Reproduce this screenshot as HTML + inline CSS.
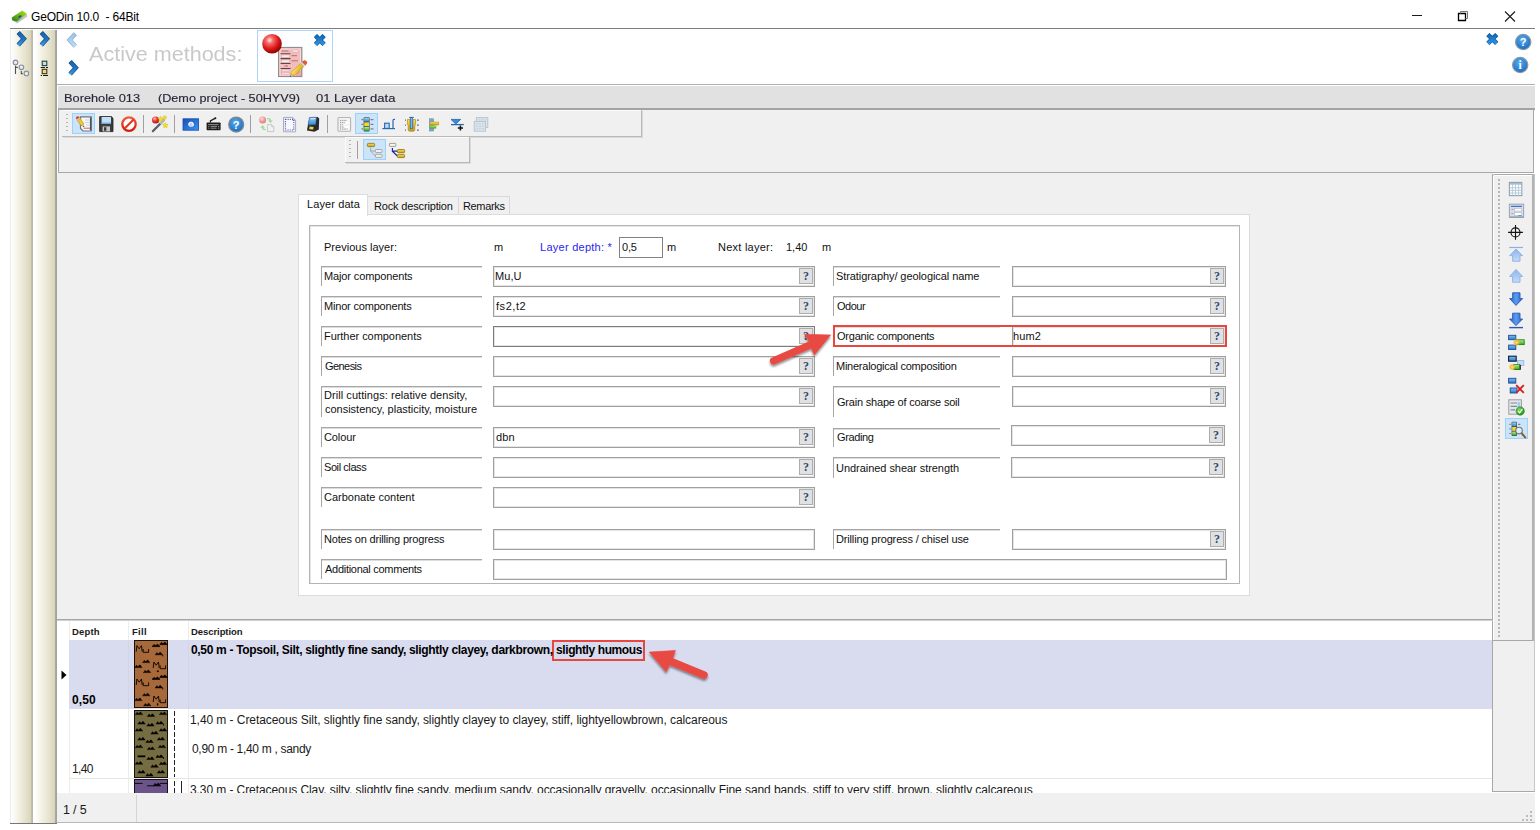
<!DOCTYPE html>
<html>
<head>
<meta charset="utf-8">
<title>GeODin 10.0 - 64Bit</title>
<style>
*{box-sizing:border-box;margin:0;padding:0}
html,body{width:1540px;height:830px;overflow:hidden;background:#fff}
body{font-family:"Liberation Sans",sans-serif;font-size:11px;color:#111;position:relative}
.a{position:absolute}
.t{position:absolute;white-space:pre;line-height:1}
.strip{position:absolute;top:30px;width:22px;height:793px;background:linear-gradient(90deg,#ffffff 0%,#f4f2e6 35%,#e2dfc8 80%,#d8d4b8 100%)}
.lbl{position:absolute;border-top:1px solid #a6a6a6;border-left:1px solid #a6a6a6;width:161px;height:20px;box-shadow:inset 0 1px 0 #dcdcdc}
.inp{position:absolute;border:1px solid #a0a0a0;background:#fff;height:21px;box-shadow:inset 0 0 0 1px #e4e4e4}
.q{position:absolute;width:14px;height:16px;background:#e1e1e1;border:1px solid #adadad;font-family:"Liberation Serif",serif;font-weight:bold;font-size:12px;line-height:14px;text-align:center;color:#2c4a78}
.sel{position:absolute;background:#cce4f7;border:1px solid #99d1ff}
.sep{position:absolute;width:1px;background:#a0a0a0}
.grip{position:absolute;width:2px;background-image:linear-gradient(#b4b4b4 1px,transparent 1px);background-size:2px 4px}
svg{position:absolute;overflow:visible}
</style>
</head>
<body>
<!-- ============ TITLE BAR ============ -->
<svg class="a" style="left:8px;top:6px" width="24" height="20" viewBox="8 6 24 20">
  <defs><linearGradient id="tig" x1="0.9" y1="0.1" x2="0.15" y2="0.9"><stop offset="0" stop-color="#a4de12"/><stop offset="0.5" stop-color="#6cbc10"/><stop offset="1" stop-color="#38861c"/></linearGradient>
  <filter id="tib"><feGaussianBlur stdDeviation="0.45"/></filter></defs>
  <g filter="url(#tib)">
  <path d="M11.6 19.5 L17 23.6 L27.4 16.4 L26.8 14 L12 17.5 Z" fill="#c4c4c4"/>
  <path d="M11.8 17.4 L22.2 10.4 L26.8 13.8 L17 21.6 L12.4 20.4 Z" fill="url(#tig)"/>
  <ellipse cx="19.9" cy="16.5" rx="1.7" ry="1" fill="#2a3cc8" transform="rotate(-25 19.9 16.5)"/>
  </g>
</svg>
<!-- window controls -->
<svg class="a" style="left:1400px;top:5px" width="130" height="22" viewBox="0 0 130 22">
  <path d="M12 10.5 H22" stroke="#1a1a1a" stroke-width="1" fill="none"/>
  <path d="M58.5 8.5 H65.5 V15.5 H58.5 Z" stroke="#000" stroke-width="1.3" fill="none"/>
  <path d="M60.5 8.5 V6.5 H67.5 V13.5 H65.5" stroke="#777" stroke-width="1" fill="none"/>
  <path d="M105 6.5 L115 16.5 M115 6.5 L105 16.5" stroke="#1a1a1a" stroke-width="1.1" fill="none"/>
</svg>
<!-- top line -->
<div class="a" style="left:10px;top:28px;width:1525px;height:1px;background:#7e7e7e"></div>

<!-- ============ LEFT STRIPS ============ -->
<div class="strip" style="left:10px;width:21px;border-left:1px solid #ececec"></div>
<div class="a" style="left:31px;top:30px;width:2px;height:793px;background:linear-gradient(90deg,#c6c2ac,#b4b4b2)"></div>
<div class="strip" style="left:34px;width:21px"></div>
<div class="a" style="left:54.5px;top:30px;width:2.5px;height:793px;background:linear-gradient(90deg,#b8b6a6,#9e9e9e 40%,#a6a6a6)"></div>
<div class="a" style="left:10px;top:823px;width:47px;height:1px;background:#777"></div>

<svg style="left:0;top:0" width="60" height="90" viewBox="0 0 60 90">
  <defs>
    <linearGradient id="chv" x1="0" y1="0" x2="0" y2="1"><stop offset="0" stop-color="#1c63a8"/><stop offset="0.55" stop-color="#1f74c4"/><stop offset="1" stop-color="#3f9be6"/></linearGradient>
  </defs>
  <!-- chevrons -->
  <path d="M18.20 32.60 L23.90 38.85 L18.20 45.10" fill="none" stroke="#12518f" stroke-width="4.5"/><path d="M18.20 32.60 L23.90 38.85 L18.20 45.10" fill="none" stroke="url(#chv)" stroke-width="3"/>
  <path d="M41.30 32.60 L47.00 38.85 L41.30 45.10" fill="none" stroke="#12518f" stroke-width="4.5"/><path d="M41.30 32.60 L47.00 38.85 L41.30 45.10" fill="none" stroke="url(#chv)" stroke-width="3"/>
  <!-- tree icon -->
  <g stroke="#8c9096" stroke-width="1.1" fill="#e2ecf8">
    <circle cx="15.5" cy="62.4" r="2.3"/><circle cx="21.4" cy="67.3" r="2.3"/><circle cx="26.4" cy="73.4" r="2.3"/>
  </g>
  <path d="M15.5 65.8 V74 M15.5 67.4 H17.8 M21.3 71 V73.6 H22.8" stroke="#4a5058" stroke-width="1.1" fill="none"/>
  <!-- network icon -->
  <rect x="42.2" y="61.2" width="4.6" height="4.4" fill="#b4ecdc" stroke="#2c3c3c" stroke-width="1.1"/>
  <rect x="42.2" y="69.3" width="4.6" height="4.4" fill="#f8da6c" stroke="#3c3420" stroke-width="1.1"/>
  <path d="M40.7 67.5 H45 M46 67.5 H48" stroke="#1a1a1a" stroke-width="1"/>
  <path d="M40.7 75.5 H42 M43 75.5 H48" stroke="#1a1a1a" stroke-width="1"/>
</svg>


<!-- ============ ACTIVE METHODS PANEL ============ -->
<div class="a" style="left:57px;top:84px;width:1478px;height:1px;background:#b0b0b0"></div>
<div class="a" style="left:257px;top:30px;width:76px;height:52px;border:1px solid #b4d2f4;background:#fdfeff"></div>
<svg style="left:0;top:0" width="1540" height="90" viewBox="0 0 1540 90">
  <defs>
    <linearGradient id="chl" x1="0" y1="0" x2="0" y2="1"><stop offset="0" stop-color="#9fc0e0"/><stop offset="1" stop-color="#bcdcf8"/></linearGradient>
    <radialGradient id="rb" cx="0.38" cy="0.32" r="0.7"><stop offset="0" stop-color="#ffe4e4"/><stop offset="0.25" stop-color="#f86a6a"/><stop offset="0.65" stop-color="#d81818"/><stop offset="1" stop-color="#8c0000"/></radialGradient>
    <linearGradient id="bx" x1="0" y1="0" x2="0" y2="1"><stop offset="0" stop-color="#1668b4"/><stop offset="1" stop-color="#2b94e8"/></linearGradient>
    <radialGradient id="hb" cx="0.45" cy="0.35" r="0.75"><stop offset="0" stop-color="#5aaef0"/><stop offset="0.7" stop-color="#2478c8"/><stop offset="1" stop-color="#1b5ea6"/></radialGradient>
    <linearGradient id="pn" x1="0" y1="0" x2="1" y2="1"><stop offset="0" stop-color="#fbe86a"/><stop offset="1" stop-color="#d4a818"/></linearGradient>
  </defs>
  <!-- chevrons -->
  <path d="M75.30 33.80 L69.60 40.05 L75.30 46.30" fill="none" stroke="#8db4d8" stroke-width="4.5"/><path d="M75.30 33.80 L69.60 40.05 L75.30 46.30" fill="none" stroke="url(#chl)" stroke-width="3"/>
  <path d="M70.10 61.60 L75.80 67.85 L70.10 74.10" fill="none" stroke="#12518f" stroke-width="4.5"/><path d="M70.10 61.60 L75.80 67.85 L70.10 74.10" fill="none" stroke="url(#chv)" stroke-width="3"/>
  <!-- form -->
  <rect x="278.6" y="47.5" width="23.2" height="29" fill="#f6bcbc" stroke="#8e8e8e" stroke-width="1.2"/>
  <rect x="280" y="49" width="20.4" height="26" fill="none" stroke="#fbdcdc" stroke-width="1"/>
  <g stroke="#5a4a4a" stroke-width="1.1"><path d="M280.5 53.7 H290.5 M280.5 58.6 H290.5 M280.5 63.5 H290.5 M280.5 68.5 H290.5"/></g>
  <g fill="#fdf0f0" stroke="#d89a9a" stroke-width="0.5"><rect x="281.5" y="55" width="8" height="2.2"/><rect x="281.5" y="60" width="8" height="2.2"/><rect x="292" y="50" width="6.5" height="2"/><rect x="281.5" y="70" width="8" height="1.6"/><rect x="281.5" y="72.4" width="8" height="1.6"/><rect x="281" y="65" width="2" height="2"/><rect x="290.5" y="65" width="2" height="2"/></g>
  <path d="M281.5 51 H288.5 M291.5 55.7 H297 M291.5 60.8 H298 M284.5 66 H288" stroke="#9c6c6c" stroke-width="0.9"/>
  <rect x="296" y="71" width="5" height="5" fill="#f09090" opacity="0.7"/>
  <!-- pencil -->
  <g transform="translate(289.6 77) rotate(-43.5)">
    <path d="M0 0 L4 -2.3 L4 2.3 Z" fill="#d8b890"/><path d="M0 0 L1.6 -0.9 L1.6 0.9 Z" fill="#444"/>
    <rect x="4" y="-2.3" width="13.5" height="4.6" fill="url(#pn)" stroke="#b89018" stroke-width="0.5"/>
    <rect x="17.5" y="-2.4" width="1.8" height="4.8" fill="#d8d8d8"/>
    <path d="M19.3 -2.4 H20.8 A2.4 2.4 0 0 1 20.8 2.4 H19.3 Z" fill="#e05838"/>
  </g>
  <!-- red ball -->
  <circle cx="272" cy="43.7" r="9.8" fill="url(#rb)"/>
  <!-- blue X in box -->
  <g transform="translate(319.8 40)">
    <path d="M-4.3 -4.3 L4.3 4.3 M4.3 -4.3 L-4.3 4.3" stroke="#0f5896" stroke-width="4.6" stroke-linecap="butt"/>
    <path d="M-4.3 -4.3 L4.3 4.3 M4.3 -4.3 L-4.3 4.3" stroke="url(#bx)" stroke-width="3.2" stroke-linecap="butt"/>
  </g>
  <!-- blue X right -->
  <g transform="translate(1492.3 39)">
    <path d="M-4.4 -4.4 L4.4 4.4 M4.4 -4.4 L-4.4 4.4" stroke="#0f5896" stroke-width="4.6"/>
    <path d="M-4.4 -4.4 L4.4 4.4 M4.4 -4.4 L-4.4 4.4" stroke="url(#bx)" stroke-width="3.2"/>
  </g>
  <!-- help -->
  <circle cx="1523.2" cy="42" r="7.6" fill="url(#hb)" stroke="#8a98a8" stroke-width="1.3"/>
  <text x="1523.2" y="46" font-family="Liberation Sans, sans-serif" font-weight="bold" font-size="11" fill="#fff" text-anchor="middle">?</text>
  <!-- info -->
  <circle cx="1520.2" cy="65" r="7.6" fill="url(#hb)" stroke="#8a98a8" stroke-width="1.3"/>
  <text x="1520.2" y="69.2" font-family="Liberation Serif, serif" font-weight="bold" font-size="11.5" fill="#fff" text-anchor="middle">i</text>
</svg>


<!-- ============ HEADER STRIP ============ -->
<div class="a" style="left:58px;top:86px;width:1477px;height:22px;background:#e1e1e1"></div>
<div class="a" style="left:58px;top:108px;width:1477px;height:2px;background:#a3a3a3"></div>

<!-- ============ TOOLBAR AREA ============ -->
<div class="a" style="left:58px;top:110px;width:1476px;height:63px;background:#f0f0f0"></div>
<div class="a" style="left:58px;top:110px;width:1px;height:63px;background:#a8a8a8"></div>
<div class="a" style="left:1533px;top:110px;width:1px;height:63px;background:#a8a8a8"></div>
<div class="a" style="left:58px;top:172px;width:1476px;height:1px;background:#a8a8a8"></div>
<!-- toolbar 1 -->
<div class="a" style="left:62px;top:110px;width:580px;height:27px;background:#f0f0f0;border-right:1px solid #b9b9b9;border-bottom:1px solid #b9b9b9;box-shadow:1px 1px 0 #dadada,inset 0 1px 0 #fbfbfb"></div>
<div class="grip" style="left:66px;top:114px;height:19px"></div>
<div class="sel" style="left:72px;top:113px;width:23px;height:21px"></div>
<div class="sep" style="left:143px;top:115px;height:18px"></div>
<div class="sep" style="left:174px;top:115px;height:18px"></div>
<div class="sep" style="left:250px;top:115px;height:18px"></div>
<div class="sep" style="left:327px;top:115px;height:18px"></div>
<div class="sel" style="left:355px;top:113px;width:23px;height:21px"></div>
<!-- toolbar 2 -->
<div class="a" style="left:345px;top:137px;width:125px;height:26px;background:#f0f0f0;border-right:1px solid #b9b9b9;border-bottom:1px solid #b9b9b9;box-shadow:1px 1px 0 #dadada,inset 1px 1px 0 #fbfbfb"></div>
<div class="grip" style="left:349px;top:140px;height:19px"></div>
<div class="sep" style="left:357px;top:141px;height:18px"></div>
<div class="sel" style="left:363px;top:139px;width:23px;height:21px"></div>
<svg style="left:0;top:0" width="700" height="170" viewBox="0 0 700 170">
  <defs>
    <linearGradient id="scr" x1="0" y1="0" x2="1" y2="1"><stop offset="0" stop-color="#1a52b8"/><stop offset="0.6" stop-color="#2a78dc"/><stop offset="1" stop-color="#3a98f0"/></linearGradient>
    <radialGradient id="rb2" cx="0.38" cy="0.32" r="0.7"><stop offset="0" stop-color="#ffd0d0"/><stop offset="0.4" stop-color="#f04848"/><stop offset="1" stop-color="#b00808"/></radialGradient>
    <radialGradient id="rb3" cx="0.4" cy="0.35" r="0.7"><stop offset="0" stop-color="#fde4e4"/><stop offset="0.5" stop-color="#f49c9c"/><stop offset="1" stop-color="#e07878"/></radialGradient>
    <linearGradient id="yl" x1="0" y1="0" x2="0" y2="1"><stop offset="0" stop-color="#f8e060"/><stop offset="1" stop-color="#c8a010"/></linearGradient>
    <linearGradient id="bl" x1="0" y1="0" x2="0" y2="1"><stop offset="0" stop-color="#9cd0f8"/><stop offset="1" stop-color="#3a88d0"/></linearGradient>
    <linearGradient id="gn" x1="0" y1="0" x2="0" y2="1"><stop offset="0" stop-color="#b0f090"/><stop offset="1" stop-color="#38a818"/></linearGradient>
    <linearGradient id="nos" x1="0" y1="0" x2="0" y2="1"><stop offset="0" stop-color="#f05a3a"/><stop offset="1" stop-color="#d41c08"/></linearGradient>
  </defs>
  <!-- 1 edit doc -->
  <path d="M80.5 116.8 H91.3 V131 H83 L80.5 128.5 Z" fill="#f4f6f8" stroke="#6e7680" stroke-width="1.2"/>
  <path d="M90.6 117.5 V130.3" stroke="#4a525c" stroke-width="1.4"/>
  <path d="M83.5 128.2 H90" stroke="#e06060" stroke-width="1"/>
  <path d="M85 120 H89 M85 122.5 H89 M86 125 H89" stroke="#c0c8d8" stroke-width="0.8"/>
  <g transform="translate(84.2 127.2) rotate(-125)">
    <path d="M0 0 L3 -1.7 L3 1.7 Z" fill="#e0c090"/><path d="M0 0 L1.2 -0.7 L1.2 0.7 Z" fill="#333"/>
    <rect x="3" y="-1.7" width="6.6" height="3.4" fill="#f0c830" stroke="#b08810" stroke-width="0.5"/>
    <rect x="9.6" y="-1.8" width="1" height="3.6" fill="#d0d0d0"/>
    <path d="M10.6 -1.8 H11.2 A1.8 1.8 0 0 1 11.2 1.8 H10.6 Z" fill="#e04030"/>
  </g>
  <!-- 2 floppy -->
  <path d="M99.6 116.6 H111.4 L113 118.2 V131.6 H99.6 Z" fill="#3c3c3c" stroke="#222" stroke-width="0.8"/>
  <rect x="101.6" y="117" width="9.4" height="7" fill="#bfe0f8"/>
  <rect x="101.6" y="122.6" width="9.4" height="1.4" fill="#6aa8dc"/>
  <rect x="102.6" y="126.4" width="7.4" height="5" fill="#c8c8c8"/>
  <rect x="104" y="127.2" width="2.4" height="3.6" fill="#3c3c3c"/>
  <!-- 3 no sign -->
  <circle cx="129" cy="124.1" r="6.7" fill="#fff" stroke="url(#nos)" stroke-width="2.3"/>
  <path d="M124.6 128.5 L133.4 119.7" stroke="#e23a1c" stroke-width="2.1"/>
  <!-- 4 wand -->
  <path d="M152.8 131.2 L163.6 120.4" stroke="#5a5e66" stroke-width="2.2" stroke-linecap="round"/>
  <path d="M160.8 123.2 L163.6 120.4" stroke="#b8bcc4" stroke-width="2.2" stroke-linecap="round"/>
  <circle cx="155.6" cy="120" r="3.6" fill="url(#rb2)"/>
  <g fill="#f4e020" stroke="#c8b010" stroke-width="0.4">
    <path d="M160.6 116.2 l0.9 1.7 1.9 0.3 -1.4 1.3 0.3 1.9 -1.7 -0.9 -1.7 0.9 0.3 -1.9 -1.4 -1.3 1.9 -0.3z"/>
    <path d="M164.8 115.4 l0.7 1.3 1.4 0.2 -1 1 0.2 1.4 -1.3 -0.7 -1.3 0.7 0.2 -1.4 -1 -1 1.4 -0.2z"/>
    <path d="M165.4 122.6 l0.9 1.7 1.9 0.3 -1.4 1.3 0.3 1.9 -1.7 -0.9 -1.7 0.9 0.3 -1.9 -1.4 -1.3 1.9 -0.3z"/>
  </g>
  <!-- 5 blue screen -->
  <rect x="183" y="118.8" width="15.6" height="11.4" fill="url(#scr)" stroke="#184aa8" stroke-width="0.8"/>
  <path d="M188.5 125.5 A2.8 2.8 0 1 1 193 126.6 L192.2 124.6 A1.2 1.2 0 1 0 190 124.9 Z" fill="#f4f8ff"/>
  <circle cx="191" cy="124.4" r="2.6" fill="#e8f0fc" opacity="0.75"/>
  <!-- 6 keyboard -->
  <rect x="206.6" y="122.4" width="14" height="7.8" rx="0.8" fill="#1c1c1c"/>
  <path d="M208.2 124.6 H218.6 M208.2 126.4 H209.4 M210.6 126.4 H217 M218 126.4 H219.2 M208.2 128.2 H209.4 M210.6 128.2 H216.6 M218 128.2 H219.2" stroke="#9a9a9a" stroke-width="0.9"/>
  <path d="M210.4 122.4 V120.8 L215.4 118.2" stroke="#1c1c1c" stroke-width="1.3" fill="none"/>
  <circle cx="215.4" cy="118.2" r="1" fill="#1c1c1c"/>
  <!-- 7 help -->
  <circle cx="236.2" cy="124.6" r="7.4" fill="url(#hb)" stroke="#7c8894" stroke-width="1.4"/>
  <text x="236.2" y="128.6" font-family="Liberation Sans, sans-serif" font-weight="bold" font-size="11" fill="#fff" text-anchor="middle">?</text>
  <!-- 8 ball + arrows (disabled) -->
  <circle cx="262.6" cy="119.9" r="3.5" fill="url(#rb3)"/>
  <path d="M267 118.2 Q271 117.6 271 120.4 L272.8 120.4 L270.4 123 L268 120.4 L269.6 120.4 Q269.6 119 267 119.2 Z" fill="#9cdc9c"/>
  <path d="M266 130 Q262 130.6 262 127.8 L260.2 127.8 L262.6 125.2 L265 127.8 L263.4 127.8 Q263.4 129.2 266 129 Z" fill="#9cdc9c"/>
  <path d="M267.6 124.6 H271.6 L273.8 126.8 V131.6 H267.6 Z" fill="#f2f2f2" stroke="#c4c4c4" stroke-width="0.9"/>
  <path d="M271.6 124.6 V126.8 H273.8" fill="none" stroke="#c4c4c4" stroke-width="0.8"/>
  <!-- 9 dotted doc -->
  <path d="M283.5 117.4 H292.6 L295.6 120.4 V131.8 H283.5 Z" fill="#f6f8fc" stroke="#a8aeb6" stroke-width="1"/>
  <path d="M292.6 117.4 V120.4 H295.6" fill="none" stroke="#a8aeb6" stroke-width="0.9"/>
  <rect x="285.4" y="119.4" width="8.4" height="10.6" fill="none" stroke="#5858d8" stroke-width="1.2" stroke-dasharray="1.1 1.1"/>
  <!-- 10 archive box -->
  <path d="M309.6 117.4 L317.6 117 L319.2 118.6 L318.8 129.6 L314.4 131.8 L307 130.6 L308 124.2 Z" fill="#2a2a2e"/>
  <path d="M309.4 117.6 L316.4 117.2 L315.6 124.6 L308.2 125 Z" fill="url(#bl)" stroke="#2868b0" stroke-width="0.6"/>
  <path d="M310.6 118.8 L315.4 118.5" stroke="#d8ecfc" stroke-width="1"/>
  <path d="M309.6 126.6 L313.6 127 L313.2 129.6 L309.2 129.2 Z" fill="#f0d838"/>
  <!-- 11 gray grid doc -->
  <rect x="338" y="117.5" width="12.6" height="13.8" rx="1" fill="#f4f4f4" stroke="#b4b4b4" stroke-width="1.1"/>
  <g stroke="#7c7c7c" stroke-width="0.9" stroke-dasharray="1 0.8"><path d="M340 120.4 H346.6 M340 122.6 H345 M340 124.8 H343.6 M340 127 H344 M340 129 H347.6"/></g>
  <rect x="346" y="121.6" width="3.2" height="2" fill="#fff"/><rect x="345" y="126" width="4.2" height="2" fill="#fff"/>
  <!-- 12 traffic light -->
  <rect x="363.6" y="117.2" width="6" height="14.2" rx="1" fill="#3c4c5c"/>
  <rect x="364.2" y="117.8" width="4.8" height="3.8" fill="url(#bl)"/>
  <rect x="364.2" y="122.4" width="4.8" height="3.8" fill="#f4d828"/>
  <rect x="364.2" y="127" width="4.8" height="3.8" fill="url(#gn)"/>
  <path d="M361.4 119.7 H363 M361.4 124.3 H363 M361.4 128.9 H363 M370.6 119.7 H373.4 M370.6 124.3 H373.4 M370.6 128.9 H373.4" stroke="#6a6a6a" stroke-width="1"/>
  <!-- 13 graph -->
  <path d="M382.4 128.6 H395" stroke="#2868b0" stroke-width="1.2"/>
  <rect x="384.6" y="123.2" width="4.6" height="5.2" fill="#b4dcf8" stroke="#2868b0" stroke-width="1.1"/>
  <path d="M393 128.4 V120.4 Q393 119.4 394 119.4 H395" stroke="#2868b0" stroke-width="1.2" fill="none"/>
  <!-- 14 tube -->
  <path d="M407.4 119.6 H410 V128.6 H413 V119.6 H415.6 V123.4 Q415.6 125 414.8 125.6 V129.6 Q414.8 131.2 413.2 131.2 H409.8 Q408.2 131.2 408.2 129.6 V125.6 Q407.4 125 407.4 123.4 Z" fill="url(#yl)" stroke="#a88810" stroke-width="0.7"/>
  <rect x="410.4" y="117.4" width="2.2" height="11.4" fill="#78b8f0" stroke="#2868b0" stroke-width="0.7"/>
  <path d="M409.2 117.4 H413.8" stroke="#2868b0" stroke-width="1"/>
  <g fill="#444"><rect x="405" y="119.6" width="1" height="1"/><rect x="405" y="124.6" width="1" height="1"/><rect x="405" y="129.6" width="1" height="1"/><rect x="417" y="119.6" width="1.8" height="1"/><rect x="417" y="124.6" width="1.8" height="1"/><rect x="417" y="129.6" width="1.8" height="1"/></g>
  <!-- 15 bars -->
  <rect x="429.4" y="118.8" width="4.2" height="12.2" fill="#9aa8b8" stroke="#7888a0" stroke-width="0.6"/>
  <rect x="430" y="119.4" width="3" height="1.8" fill="#58a8f0"/><rect x="430" y="128.6" width="3" height="1.8" fill="#58a8f0"/>
  <rect x="430" y="122" width="8.8" height="3" fill="url(#yl)" stroke="#b89410" stroke-width="0.5"/>
  <rect x="430" y="125.8" width="6" height="2.4" fill="url(#gn)" stroke="#48a020" stroke-width="0.4"/>
  <!-- 16 funnel -->
  <path d="M451 119.4 H460.6 L455.8 124 Z" fill="#3a8ae0" stroke="#1c60b0" stroke-width="0.8"/>
  <path d="M451 124.6 H463.8" stroke="#2868b0" stroke-width="1.3"/>
  <path d="M460.4 125.4 V130.6 M457.8 128 H463" stroke="#111" stroke-width="1.5"/>
  <!-- 17 pages -->
  <g fill="#dfe6ee" stroke="#b4c0cc" stroke-width="0.9"><rect x="476.4" y="117.6" width="11.4" height="9.8"/><rect x="474.2" y="121.4" width="11.4" height="9.8"/></g>
  <g stroke="#c4d0dc" stroke-width="0.6"><path d="M474.2 123.8 H485.6 M474.2 126.2 H485.6 M474.2 128.6 H485.6 M477 121.4 V131.2 M479.9 121.4 V131.2 M482.8 121.4 V131.2"/><path d="M476.4 119.8 H487.8 M479.2 117.6 V121.4 M482 117.6 V121.4 M484.8 117.6 V121.4"/></g>
  <!-- toolbar2 icon 1 -->
  <rect x="367.4" y="143.4" width="7.2" height="3.2" rx="0.8" fill="url(#yl)" stroke="#8a7410" stroke-width="0.8"/>
  <path d="M370.6 147.4 V151 H375 M370.6 151 L375 155.8" stroke="#a0a0a0" stroke-width="0.9" fill="none"/>
  <rect x="375.4" y="149.5" width="6.6" height="3" rx="0.6" fill="#f0f0f0" stroke="#9a9a9a" stroke-width="0.8"/>
  <rect x="375.4" y="154.4" width="6.6" height="3" rx="0.6" fill="#f0f0f0" stroke="#9a9a9a" stroke-width="0.8"/>
  <!-- toolbar2 icon 2 -->
  <rect x="389.4" y="143.4" width="6.4" height="3" rx="0.6" fill="#f4f4f4" stroke="#8c8c8c" stroke-width="0.8"/>
  <path d="M392.4 148 V151.2 H397.4 M392.4 151.2 L397.4 156" stroke="#2424a8" stroke-width="1.2" fill="none"/>
  <rect x="397.4" y="149.5" width="7.2" height="3.2" rx="0.8" fill="url(#yl)" stroke="#8a7410" stroke-width="0.8"/>
  <rect x="397.4" y="154.4" width="7.2" height="3.2" rx="0.8" fill="url(#yl)" stroke="#8a7410" stroke-width="0.8"/>
</svg>


<!-- ============ MAIN PANEL ============ -->
<div class="a" style="left:57px;top:173px;width:1436px;height:447px;background:#f0f0f0"></div>
<!-- right panel -->
<div class="a" style="left:1492px;top:174px;width:43px;height:618px;background:#f0f0f0;border-left:1px solid #a8a8a8;border-right:1px solid #c6c6c6;border-bottom:1px solid #a8a8a8"></div>
<div class="a" style="left:1493px;top:174px;width:41px;height:467px;background:#f0f0f0;border-top:1px solid #a8a8a8;border-right:2px solid #b2b2b2;border-bottom:1px solid #a8a8a8;box-shadow:inset 1px 1px 0 #fff;border-top-left-radius:2px"></div>
<div class="grip" style="left:1498px;top:179px;height:460px;width:2px;background-image:linear-gradient(#b6b6b6 2px,transparent 2px);background-size:2px 4px"></div>
<div class="sel" style="left:1505px;top:418px;width:23px;height:21px"></div>
<svg style="left:1490px;top:170px" width="50" height="280" viewBox="1490 170 50 280">
  <defs>
    <linearGradient id="aL" x1="0" y1="0" x2="0" y2="1"><stop offset="0" stop-color="#8cb4ec"/><stop offset="1" stop-color="#c4dcf8"/></linearGradient>
    <linearGradient id="aD" x1="0" y1="0" x2="1" y2="0"><stop offset="0" stop-color="#2c62c8"/><stop offset="0.5" stop-color="#5a9cf0"/><stop offset="1" stop-color="#2c62c8"/></linearGradient>
    <linearGradient id="bb" x1="0" y1="0" x2="0" y2="1"><stop offset="0" stop-color="#7cc0f4"/><stop offset="1" stop-color="#2c78cc"/></linearGradient>
    <radialGradient id="st" cx="0.5" cy="0.5" r="0.5"><stop offset="0" stop-color="#ffe890"/><stop offset="0.45" stop-color="#f8b830"/><stop offset="1" stop-color="#f8c040" stop-opacity="0"/></radialGradient>
    <radialGradient id="gc" cx="0.4" cy="0.35" r="0.7"><stop offset="0" stop-color="#7cdc5c"/><stop offset="1" stop-color="#1c8c1c"/></radialGradient>
  </defs>
  <!-- 1 grid -->
  <rect x="1509.4" y="182.4" width="12.4" height="13.2" fill="#fff" stroke="#8ca0b4" stroke-width="1.1"/>
  <rect x="1509.9" y="182.9" width="11.4" height="1.8" fill="#a8bccc"/>
  <path d="M1509.4 187.8 H1521.8 M1509.4 190.4 H1521.8 M1509.4 193 H1521.8 M1512.4 184.6 V195.6 M1515.5 184.6 V195.6 M1518.6 184.6 V195.6" stroke="#b4c6d6" stroke-width="0.9"/>
  <!-- 2 form -->
  <rect x="1509.4" y="204.2" width="14.2" height="13.2" fill="#d8dde8" stroke="#a0a8b4" stroke-width="1.1"/>
  <path d="M1509.8 217 H1523.4" stroke="#8c949c" stroke-width="1"/>
  <path d="M1511 206.4 H1522" stroke="#3c74cc" stroke-width="1.2"/>
  <rect x="1514.6" y="208.4" width="7" height="2.6" fill="#fff" stroke="#a8b0bc" stroke-width="0.5"/>
  <rect x="1514.6" y="212.6" width="7" height="2.6" fill="#fff" stroke="#a8b0bc" stroke-width="0.5"/>
  <path d="M1511.4 209.4 H1513.4 M1511.4 213.6 H1513.4" stroke="#8c949c" stroke-width="0.8"/>
  <path d="M1518.4 215.6 H1521.6" stroke="#3c9cd8" stroke-width="1"/>
  <!-- 3 crosshair -->
  <circle cx="1515.5" cy="232.4" r="4.5" fill="none" stroke="#111" stroke-width="1.1"/>
  <path d="M1515.5 225 V239.8 M1508.1 232.4 H1522.9" stroke="#111" stroke-width="1.1"/>
  <!-- 4 to top (light) -->
  <path d="M1509.2 247.5 H1523" stroke="#8cb0e4" stroke-width="1.2"/>
  <path d="M1516 249 L1522.6 255.6 H1520 V261.2 H1512.6 V255.6 H1509.6 Z" fill="url(#aL)" stroke="#8cb0e4" stroke-width="0.9"/>
  <!-- 5 up (light) -->
  <path d="M1516 269.4 L1522.6 276.4 H1520 V282.2 H1512.6 V276.4 H1509.6 Z" fill="url(#aL)" stroke="#8cb0e4" stroke-width="0.9"/>
  <!-- 6 down -->
  <path d="M1512.6 292.8 H1520 V298.6 H1522.6 L1516 305.4 L1509.6 298.6 H1512.6 Z" fill="url(#aD)" stroke="#2858b8" stroke-width="0.9"/>
  <!-- 7 to bottom -->
  <path d="M1512.6 313.2 H1520 V319 H1522.6 L1516 325.6 L1509.6 319 H1512.6 Z" fill="url(#aD)" stroke="#2858b8" stroke-width="0.9"/>
  <path d="M1509.2 327.6 H1523" stroke="#2858b8" stroke-width="1.4"/>
  <!-- 8 -->
  <rect x="1508.6" y="335.3" width="7.2" height="4.4" fill="url(#bb)" stroke="#1c4c94" stroke-width="0.9"/>
  <rect x="1508.6" y="345.1" width="7.2" height="4.4" fill="url(#bb)" stroke="#1c4c94" stroke-width="0.9"/>
  <rect x="1516.4" y="339.8" width="7.8" height="4.8" fill="url(#gn)" stroke="#2c7c1c" stroke-width="0.9"/>
  <circle cx="1516.4" cy="342.4" r="3.8" fill="url(#st)"/>
  <!-- 9 -->
  <rect x="1508.6" y="356.2" width="7.6" height="5" fill="url(#bb)" stroke="#0c1c34" stroke-width="1.1"/>
  <rect x="1517.6" y="360.6" width="6.2" height="4.8" fill="#c4dcf4" stroke="#8cb4dc" stroke-width="0.8"/>
  <rect x="1514" y="364.8" width="6.8" height="5" fill="#111"/>
  <rect x="1513.4" y="364.6" width="6.2" height="4.8" fill="url(#gn)" stroke="#2c7c1c" stroke-width="0.7"/>
  <circle cx="1512.2" cy="367" r="3.8" fill="url(#st)"/>
  <!-- 10 -->
  <rect x="1508.6" y="378.3" width="7.2" height="4.8" fill="url(#bb)" stroke="#1c4c94" stroke-width="0.9"/>
  <rect x="1510.2" y="388" width="6.8" height="5" fill="url(#bb)" stroke="#1c4c94" stroke-width="0.9"/>
  <path d="M1516.2 385.2 L1523.8 392.8 M1523.8 385.2 L1516.2 392.8" stroke="#d42020" stroke-width="1.9"/>
  <!-- 11 -->
  <rect x="1508.8" y="399.8" width="12.6" height="14.4" fill="#e4e8ec" stroke="#9c9c9c" stroke-width="1"/>
  <path d="M1510.6 403 H1517 M1510.6 406.4 H1517 M1510.6 409.8 H1515" stroke="#7c8894" stroke-width="1.2"/>
  <rect x="1517.6" y="402" width="2.6" height="6" fill="#a8c8ec"/>
  <circle cx="1520.2" cy="411" r="4.2" fill="url(#gc)" stroke="#1c7c1c" stroke-width="0.5"/>
  <path d="M1518 411 L1519.6 412.8 L1522.4 409.2" stroke="#fff" stroke-width="1.2" fill="none"/>
  <!-- 12 -->
  <rect x="1511.6" y="421.8" width="5.4" height="14.2" rx="0.8" fill="#3c4c5c"/>
  <rect x="1512.2" y="422.4" width="4.2" height="3.8" fill="url(#bl)"/>
  <rect x="1512.2" y="427" width="4.2" height="3.8" fill="#f4d828"/>
  <rect x="1512.2" y="431.6" width="4.2" height="3.8" fill="url(#gn)"/>
  <path d="M1509.4 424.3 H1510.8 M1509.4 428.9 H1510.8 M1509.4 433.5 H1510.8 M1518 424.3 H1520.4" stroke="#6a6a6a" stroke-width="1"/>
  <path d="M1521.4 433 L1525.2 437.4" stroke="#8c5c2c" stroke-width="2" stroke-linecap="round"/>
  <circle cx="1519" cy="430.6" r="3.3" fill="#e8f0f8" fill-opacity="0.85" stroke="#6c747c" stroke-width="1.1"/>
</svg>


<!-- tabs -->
<div class="a" style="left:367px;top:196px;width:92px;height:19px;background:#f0f0f0;border:1px solid #d9d9d9"></div>
<div class="a" style="left:458px;top:196px;width:52px;height:19px;background:#f0f0f0;border:1px solid #d9d9d9"></div>
<div class="a" style="left:298px;top:214px;width:952px;height:382px;background:#fff;border:1px solid #dcdcdc"></div>
<div class="a" style="left:298px;top:194px;width:70px;height:22px;background:#fff;border:1px solid #dcdcdc;border-bottom:none"></div>
<!-- group box -->
<div class="a" style="left:309px;top:225px;width:931px;height:359px;border:1px solid #b4b4b4;box-shadow:inset 1px 1px 0 #e6e6e6"></div>

<div class="lbl" style="left:321px;top:266px;width:161px;height:20px"></div>
<div class="lbl" style="left:321px;top:296px;width:161px;height:20px"></div>
<div class="lbl" style="left:321px;top:326px;width:161px;height:20px"></div>
<div class="lbl" style="left:321px;top:356px;width:161px;height:20px"></div>
<div class="lbl" style="left:321px;top:386px;width:161px;height:31px"></div>
<div class="lbl" style="left:321px;top:427px;width:161px;height:20px"></div>
<div class="lbl" style="left:321px;top:457px;width:161px;height:20px"></div>
<div class="lbl" style="left:321px;top:487px;width:161px;height:20px"></div>
<div class="lbl" style="left:321px;top:529px;width:161px;height:20px"></div>
<div class="lbl" style="left:321px;top:559px;width:161px;height:20px"></div>
<div class="inp" style="left:493px;top:266px;width:322px;height:21px"></div>
<div class="q" style="left:799px;top:268px">?</div>
<div class="inp" style="left:493px;top:296px;width:322px;height:21px"></div>
<div class="q" style="left:799px;top:298px">?</div>
<div class="inp" style="left:493px;top:326px;width:322px;height:21px;border-color:#7c7c7c"></div>
<div class="q" style="left:799px;top:328px">?</div>
<div class="inp" style="left:493px;top:356px;width:322px;height:21px"></div>
<div class="q" style="left:799px;top:358px">?</div>
<div class="inp" style="left:493px;top:386px;width:322px;height:21px"></div>
<div class="q" style="left:799px;top:388px">?</div>
<div class="inp" style="left:493px;top:427px;width:322px;height:21px"></div>
<div class="q" style="left:799px;top:429px">?</div>
<div class="inp" style="left:493px;top:457px;width:322px;height:21px"></div>
<div class="q" style="left:799px;top:459px">?</div>
<div class="inp" style="left:493px;top:487px;width:322px;height:21px"></div>
<div class="q" style="left:799px;top:489px">?</div>
<div class="inp" style="left:493px;top:529px;width:322px;height:21px"></div>
<div class="inp" style="left:493px;top:559px;width:734px;height:21px"></div>
<div class="lbl" style="left:833px;top:266px;width:167px;height:20px"></div>
<div class="lbl" style="left:833px;top:296px;width:167px;height:20px"></div>
<div class="lbl" style="left:833px;top:326px;width:167px;height:20px"></div>
<div class="lbl" style="left:833px;top:356px;width:167px;height:20px"></div>
<div class="lbl" style="left:833px;top:386px;width:167px;height:31px"></div>
<div class="lbl" style="left:833px;top:428px;width:167px;height:19px"></div>
<div class="lbl" style="left:833px;top:457px;width:167px;height:21px"></div>
<div class="lbl" style="left:833px;top:529px;width:167px;height:20px"></div>
<div class="inp" style="left:1012px;top:266px;width:214px;height:21px"></div>
<div class="q" style="left:1210px;top:268px">?</div>
<div class="inp" style="left:1012px;top:296px;width:214px;height:21px"></div>
<div class="q" style="left:1210px;top:298px">?</div>
<div class="inp" style="left:1012px;top:326px;width:214px;height:21px"></div>
<div class="q" style="left:1210px;top:328px">?</div>
<div class="inp" style="left:1012px;top:356px;width:214px;height:21px"></div>
<div class="q" style="left:1210px;top:358px">?</div>
<div class="inp" style="left:1012px;top:386px;width:214px;height:21px"></div>
<div class="q" style="left:1210px;top:388px">?</div>
<div class="inp" style="left:1011px;top:425px;width:214px;height:21px"></div>
<div class="q" style="left:1209px;top:427px">?</div>
<div class="inp" style="left:1011px;top:457px;width:214px;height:21px"></div>
<div class="q" style="left:1209px;top:459px">?</div>
<div class="inp" style="left:1012px;top:529px;width:214px;height:21px"></div>
<div class="q" style="left:1210px;top:531px">?</div>
<div class="inp" style="left:619px;top:237px;width:44px;height:21px;border-color:#828282;box-shadow:none"></div>

<!-- ============ GRID ============ -->
<div class="a" style="left:57px;top:619px;width:1436px;height:2px;background:#a6a6a6"></div>
<div class="a" style="left:57px;top:620px;width:1436px;height:1px;background:#d0d0d0"></div>
<div class="a" style="left:57px;top:621px;width:1435px;height:172px;background:#fff;overflow:hidden" id="grid">
<!-- grid coords are relative to (57,621) -->
<div class="a" style="left:12px;top:19px;width:1423px;height:69px;background:#d9dcee"></div>
<div class="a" style="left:12px;top:0;width:1px;height:19px;background:#ececec"></div>
<div class="a" style="left:71px;top:0;width:1px;height:19px;background:#ececec"></div>
<div class="a" style="left:131px;top:0;width:1px;height:19px;background:#ececec"></div>
<div class="a" style="left:71px;top:19px;width:1px;height:69px;background:#d2d5e8"></div>
<div class="a" style="left:131px;top:19px;width:1px;height:69px;background:#d2d5e8"></div>
<div class="a" style="left:12px;top:88px;width:1px;height:90px;background:#ececec"></div>
<div class="a" style="left:71px;top:88px;width:1px;height:90px;background:#ececec"></div>
<div class="a" style="left:131px;top:88px;width:1px;height:90px;background:#ececec"></div>
<div class="a" style="left:12px;top:157px;width:1423px;height:1px;background:#e6e6e6"></div>
<!-- row indicator -->
<svg style="left:4px;top:49px" width="6" height="10" viewBox="0 0 6 10"><path d="M0.5 0.5 L5.5 5 L0.5 9.5 Z" fill="#000"/></svg>
<!-- swatch 1 -->
<div class="a" style="left:77px;top:19px;width:34px;height:68px;background:#a8693a;border:1px solid #1a1208"></div>
<!-- swatch 2 -->
<div class="a" style="left:77px;top:89px;width:34px;height:68px;background:#756c41;border:1px solid #14140a"></div>
<!-- swatch 3 -->
<div class="a" style="left:77px;top:158px;width:34px;height:20px;background:#6c5389;border:1px solid #14101c"></div>
<!-- dashed lines -->
<div class="a" style="left:117px;top:90px;width:1px;height:66px;background-image:linear-gradient(#222 5px,transparent 5px);background-size:1px 7px"></div>
<div class="a" style="left:117px;top:160px;width:1px;height:14px;background-image:linear-gradient(#222 5px,transparent 5px);background-size:1px 7px"></div>
<div class="a" style="left:124px;top:160px;width:1px;height:14px;background:#222"></div>
<!-- PATTERNS -->
<svg style="left:70px;top:15px" width="70" height="160" viewBox="127 636 70 160">
<g fill="#000" stroke="#000" stroke-width="0.45" stroke-linejoin="round">
<path d="M136.2 651.6 L136.9 645.6 L139.2 648.8 L141.5 645.6 L142.2 651.6" fill="none" stroke="#000" stroke-width="0.9"/><path d="M143.2 649.0 V652.3 H148.6 V649.0" fill="none" stroke="#000" stroke-width="0.9"/>
<path d="M153.2 668.0 L153.9 662.0 L156.2 665.2 L158.5 662.0 L159.2 668.0" fill="none" stroke="#000" stroke-width="0.9"/><path d="M160.2 665.4 V668.7 H165.6 V665.4" fill="none" stroke="#000" stroke-width="0.9"/>
<path d="M136.2 685.0 L136.9 679.0 L139.2 682.2 L141.5 679.0 L142.2 685.0" fill="none" stroke="#000" stroke-width="0.9"/><path d="M143.2 682.4 V685.7 H148.6 V682.4" fill="none" stroke="#000" stroke-width="0.9"/>
<path d="M153.2 702.0 L153.9 696.0 L156.2 699.2 L158.5 696.0 L159.2 702.0" fill="none" stroke="#000" stroke-width="0.9"/><path d="M160.2 699.4 V702.7 H165.6 V699.4" fill="none" stroke="#000" stroke-width="0.9"/>
<path d="M152.2 646.6 L153.2 645.7 L154.1 644.2 L155.1 645.6 L156.0 645.6 L156.9 644.2 L157.9 644.2 L158.8 645.7 L159.8 646.6 Z"/>
<path d="M159.6 644.6 L160.6 643.7 L161.5 642.2 L162.5 643.6 L163.4 643.6 L164.3 642.2 L165.3 642.2 L166.2 643.7 L167.2 644.6 Z"/>
<path d="M152.2 646.1 H160 M160 644.1 H167.2" stroke="#000" stroke-width="0.9"/>
<path d="M152.2 679.4 L153.2 678.5 L154.1 677.0 L155.1 678.4 L156.0 678.4 L156.9 677.0 L157.9 677.0 L158.8 678.5 L159.8 679.4 Z"/>
<path d="M159.6 677.4 L160.6 676.5 L161.5 675.0 L162.5 676.4 L163.4 676.4 L164.3 675.0 L165.3 675.0 L166.2 676.5 L167.2 677.4 Z"/>
<path d="M152.2 678.9 H160 M160 676.9 H167.2" stroke="#000" stroke-width="0.9"/>
<path d="M155.0 654.8 L156.0 653.9 L156.9 652.4 L157.9 653.8 L158.8 653.8 L159.7 652.4 L160.7 652.4 L161.6 653.9 L162.6 654.8 Z"/><path d="M161.4 653.9 L162.8 655.0 L162.8 656.4" fill="none" stroke="#000" stroke-width="0.8"/>
<path d="M155.0 688.0 L156.0 687.1 L156.9 685.6 L157.9 687.0 L158.8 687.0 L159.7 685.6 L160.7 685.6 L161.6 687.1 L162.6 688.0 Z"/><path d="M161.4 687.1 L162.8 688.2 L162.8 689.6" fill="none" stroke="#000" stroke-width="0.8"/>
<path d="M142.4 662.6 L143.4 661.7 L144.3 660.2 L145.3 661.6 L146.2 661.6 L147.1 660.2 L148.1 660.2 L149.0 661.7 L150.0 662.6 Z"/>
<path d="M134.6 667.5 L135.6 666.6 L136.5 665.1 L137.5 666.5 L138.4 666.5 L139.3 665.1 L140.3 665.1 L141.2 666.6 L142.2 667.5 Z"/>
<path d="M143.2 672.6 L144.2 671.7 L145.1 670.2 L146.1 671.6 L147.0 671.6 L147.9 670.2 L148.9 670.2 L149.8 671.7 L150.8 672.6 Z"/>
<path d="M142.4 695.8 L143.4 694.9 L144.3 693.4 L145.3 694.8 L146.2 694.8 L147.1 693.4 L148.1 693.4 L149.0 694.9 L150.0 695.8 Z"/>
<path d="M134.6 700.6 L135.6 699.7 L136.5 698.2 L137.5 699.6 L138.4 699.6 L139.3 698.2 L140.3 698.2 L141.2 699.7 L142.2 700.6 Z"/>
<path d="M143.4 705.8 L144.4 704.9 L145.3 703.4 L146.3 704.8 L147.2 704.8 L148.1 703.4 L149.1 703.4 L150.0 704.9 L151.0 705.8 Z"/>
<rect x="157" y="670.8" width="1.6" height="0.9"/><rect x="157.2" y="703.6" width="0.9" height="1.6"/>
<path d="M135.2 714.6 L136.2 713.7 L137.1 712.2 L138.1 713.6 L139.0 713.6 L139.9 712.2 L140.9 712.2 L141.8 713.7 L142.8 714.6 Z"/>
<path d="M147.2 716.4 L148.2 715.5 L149.1 714.0 L150.1 715.4 L151.0 715.4 L151.9 714.0 L152.9 714.0 L153.8 715.5 L154.8 716.4 Z"/>
<path d="M159.2 714.6 L160.2 713.7 L161.1 712.2 L162.1 713.6 L163.0 713.6 L163.9 712.2 L164.9 712.2 L165.8 713.7 L166.8 714.6 Z"/>
<path d="M137.7 724.0 L138.7 723.1 L139.6 721.6 L140.6 723.0 L141.5 723.0 L142.4 721.6 L143.4 721.6 L144.3 723.1 L145.3 724.0 Z"/>
<path d="M146.7 726.0 L147.7 725.1 L148.6 723.6 L149.6 725.0 L150.5 725.0 L151.4 723.6 L152.4 723.6 L153.3 725.1 L154.3 726.0 Z"/>
<path d="M155.8 724.0 L156.8 723.1 L157.7 721.6 L158.7 723.0 L159.6 723.0 L160.5 721.6 L161.5 721.6 L162.4 723.1 L163.4 724.0 Z"/><path d="M162.2 723.1 L163.6 724.2 L163.6 725.6" fill="none" stroke="#000" stroke-width="0.8"/>
<path d="M135.2 731.0 L136.2 730.1 L137.1 728.6 L138.1 730.0 L139.0 730.0 L139.9 728.6 L140.9 728.6 L141.8 730.1 L142.8 731.0 Z"/>
<path d="M150.7 734.0 L151.7 733.1 L152.6 731.6 L153.6 733.0 L154.5 733.0 L155.4 731.6 L156.4 731.6 L157.3 733.1 L158.3 734.0 Z"/>
<path d="M159.2 731.0 L160.2 730.1 L161.1 728.6 L162.1 730.0 L163.0 730.0 L163.9 728.6 L164.9 728.6 L165.8 730.1 L166.8 731.0 Z"/>
<path d="M137.7 740.0 L138.7 739.1 L139.6 737.6 L140.6 739.0 L141.5 739.0 L142.4 737.6 L143.4 737.6 L144.3 739.1 L145.3 740.0 Z"/>
<path d="M145.7 742.5 L146.7 741.6 L147.6 740.1 L148.6 741.5 L149.5 741.5 L150.4 740.1 L151.4 740.1 L152.3 741.6 L153.3 742.5 Z"/>
<path d="M157.2 740.0 L158.2 739.1 L159.1 737.6 L160.1 739.0 L161.0 739.0 L161.9 737.6 L162.9 737.6 L163.8 739.1 L164.8 740.0 Z"/>
<path d="M135.2 747.6 L136.2 746.7 L137.1 745.2 L138.1 746.6 L139.0 746.6 L139.9 745.2 L140.9 745.2 L141.8 746.7 L142.8 747.6 Z"/>
<path d="M147.2 749.6 L148.2 748.7 L149.1 747.2 L150.1 748.6 L151.0 748.6 L151.9 747.2 L152.9 747.2 L153.8 748.7 L154.8 749.6 Z"/>
<path d="M158.2 747.6 L159.2 746.7 L160.1 745.2 L161.1 746.6 L162.0 746.6 L162.9 745.2 L163.9 745.2 L164.8 746.7 L165.8 747.6 Z"/>
<rect x="137.9" y="755.7" width="7.2" height="1.3"/>
<path d="M146.7 759.5 L147.7 758.6 L148.6 757.1 L149.6 758.5 L150.5 758.5 L151.4 757.1 L152.4 757.1 L153.3 758.6 L154.3 759.5 Z"/>
<path d="M155.8 757.4 L156.8 756.5 L157.7 755.0 L158.7 756.4 L159.6 756.4 L160.5 755.0 L161.5 755.0 L162.4 756.5 L163.4 757.4 Z"/><path d="M162.2 756.5 L163.6 757.6 L163.6 759.0" fill="none" stroke="#000" stroke-width="0.8"/>
<path d="M135.2 764.2 L136.2 763.3 L137.1 761.8 L138.1 763.2 L139.0 763.2 L139.9 761.8 L140.9 761.8 L141.8 763.3 L142.8 764.2 Z"/>
<path d="M150.7 767.2 L151.7 766.3 L152.6 764.8 L153.6 766.2 L154.5 766.2 L155.4 764.8 L156.4 764.8 L157.3 766.3 L158.3 767.2 Z"/>
<path d="M159.2 764.5 L160.2 763.6 L161.1 762.1 L162.1 763.5 L163.0 763.5 L163.9 762.1 L164.9 762.1 L165.8 763.6 L166.8 764.5 Z"/>
<path d="M137.7 773.0 L138.7 772.1 L139.6 770.6 L140.6 772.0 L141.5 772.0 L142.4 770.6 L143.4 770.6 L144.3 772.1 L145.3 773.0 Z"/>
<path d="M145.7 776.0 L146.7 775.1 L147.6 773.6 L148.6 775.0 L149.5 775.0 L150.4 773.6 L151.4 773.6 L152.3 775.1 L153.3 776.0 Z"/>
<path d="M157.2 773.0 L158.2 772.1 L159.1 770.6 L160.1 772.0 L161.0 772.0 L161.9 770.6 L162.9 770.6 L163.8 772.1 L164.8 773.0 Z"/>
<path d="M134.6 783.4 H142.6 M160 783.4 H167.4 M147 785.8 H160.6" stroke="#000" stroke-width="0.9"/>
<path d="M153.2 785.6 L154.2 784.7 L155.1 783.2 L156.1 784.6 L157.0 784.6 L157.9 783.2 L158.9 783.2 L159.8 784.7 L160.8 785.6 Z"/>
</g></svg>

</div>

<!-- ============ STATUS BAR ============ -->
<div class="a" style="left:57px;top:793px;width:1478px;height:30px;background:#f0f0f0;border-bottom:1px solid #b8b8b8"></div>
<div class="a" style="left:136px;top:795px;width:1px;height:27px;background:#d4d4d4"></div>
<svg class="a" style="left:1522px;top:811px" width="11" height="11" viewBox="0 0 11 11">
  <g fill="#bcbcbc"><rect x="8" y="0" width="2" height="2"/><rect x="4" y="4" width="2" height="2"/><rect x="8" y="4" width="2" height="2"/><rect x="0" y="8" width="2" height="2"/><rect x="4" y="8" width="2" height="2"/><rect x="8" y="8" width="2" height="2"/></g>
</svg>

<!-- red highlight boxes -->
<div class="a" style="left:833px;top:325px;width:394px;height:22px;border:2px solid #e8463f"></div>
<div class="a" style="left:552px;top:640px;width:93px;height:21px;border:2px solid #e8463f"></div>
<!-- arrows -->
<svg style="left:0;top:0" width="1540" height="830" viewBox="0 0 1540 830">
  <defs><filter id="sh" x="-20%" y="-30%" width="140%" height="170%"><feGaussianBlur in="SourceAlpha" stdDeviation="1.3"/><feOffset dx="-0.3" dy="1.8"/><feComponentTransfer><feFuncA type="linear" slope="0.45"/></feComponentTransfer><feMerge><feMergeNode/><feMergeNode in="SourceGraphic"/></feMerge></filter></defs>
  <g filter="url(#sh)" fill="#e84a42" stroke="#e84a42">
    <path d="M773.6 360.8 L810.2 344.85" stroke-width="7.4" stroke-linecap="round" fill="none"/>
    <path d="M830.6 334.9 L804.4 334.2 L809 341.2 L811.4 348.5 L814.3 355.1 Z" stroke-width="0.6" stroke-linejoin="round"/>
    <path d="M703.9 675.1 L671.1 661.5" stroke-width="7.6" stroke-linecap="round" fill="none"/>
    <path d="M649.2 652.1 L675.4 650.4 L672.8 657.9 L669.5 665.2 L666.1 671.8 Z" stroke-width="0.6" stroke-linejoin="round"/>
  </g>
</svg>


<div class="t" style="left:31px;top:11px;font-size:12px;color:#000;letter-spacing:-0.174px">GeODin 10.0  - 64Bit</div>
<div class="t" style="left:89px;top:44px;font-size:20px;color:#c9c9c9;transform:scaleX(1.0780);transform-origin:0 0">Active methods:</div>
<div class="t" style="-webkit-text-stroke:0.15px #26263a;left:64px;top:93px;font-size:11.5px;color:#26263a;transform:scaleX(1.1119);transform-origin:0 0">Borehole 013</div>
<div class="t" style="-webkit-text-stroke:0.15px #26263a;left:158px;top:93px;font-size:11.5px;color:#26263a;transform:scaleX(1.0992);transform-origin:0 0">(Demo project - 50HYV9)</div>
<div class="t" style="-webkit-text-stroke:0.15px #26263a;left:316px;top:93px;font-size:11.5px;color:#26263a;transform:scaleX(1.1286);transform-origin:0 0">01 Layer data</div>
<div class="t" style="left:307px;top:199px;font-size:11px;letter-spacing:0.100px">Layer data</div>
<div class="t" style="left:374px;top:201px;font-size:11px;letter-spacing:-0.160px">Rock description</div>
<div class="t" style="left:463px;top:201px;font-size:11px;letter-spacing:-0.350px">Remarks</div>
<div class="t" style="left:324px;top:242px;font-size:11px;letter-spacing:0.014px">Previous layer:</div>
<div class="t" style="left:494px;top:242px;font-size:11px">m</div>
<div class="t" style="left:540px;top:242px;font-size:11px;color:#2626ee;letter-spacing:0.262px">Layer depth: *</div>
<div class="t" style="left:622px;top:242px;font-size:11px;letter-spacing:-0.150px">0,5</div>
<div class="t" style="left:667px;top:242px;font-size:11px">m</div>
<div class="t" style="left:718px;top:242px;font-size:11px;letter-spacing:0.250px">Next layer:</div>
<div class="t" style="left:786px;top:242px;font-size:11px">1,40</div>
<div class="t" style="left:822px;top:242px;font-size:11px">m</div>
<div class="t" style="left:324px;top:271px;font-size:11px;letter-spacing:-0.127px">Major components</div>
<div class="t" style="left:324px;top:301px;font-size:11px;letter-spacing:-0.187px">Minor components</div>
<div class="t" style="left:324px;top:331px;font-size:11px;letter-spacing:-0.047px">Further components</div>
<div class="t" style="left:325px;top:361px;font-size:11px;letter-spacing:-0.567px">Genesis</div>
<div class="t" style="left:324px;top:390px;font-size:11px;letter-spacing:0.056px">Drill cuttings: relative density,</div>
<div class="t" style="left:325px;top:404px;font-size:11px;letter-spacing:-0.012px">consistency, plasticity, moisture</div>
<div class="t" style="left:324px;top:432px;font-size:11px;letter-spacing:-0.120px">Colour</div>
<div class="t" style="left:324px;top:462px;font-size:11px;letter-spacing:-0.422px">Soil class</div>
<div class="t" style="left:324px;top:492px;font-size:11px">Carbonate content</div>
<div class="t" style="left:324px;top:534px;font-size:11px;letter-spacing:-0.168px">Notes on drilling progress</div>
<div class="t" style="left:325px;top:564px;font-size:11px;letter-spacing:-0.278px">Additional comments</div>
<div class="t" style="left:836px;top:271px;font-size:11px;letter-spacing:-0.075px">Stratigraphy/ geological name</div>
<div class="t" style="left:837px;top:301px;font-size:11px;letter-spacing:-0.500px">Odour</div>
<div class="t" style="left:837px;top:331px;font-size:11px;letter-spacing:-0.229px">Organic components</div>
<div class="t" style="left:836px;top:361px;font-size:11px;letter-spacing:-0.242px">Mineralogical composition</div>
<div class="t" style="left:837px;top:397px;font-size:11px;letter-spacing:-0.200px">Grain shape of coarse soil</div>
<div class="t" style="left:837px;top:432px;font-size:11px;letter-spacing:-0.367px">Grading</div>
<div class="t" style="left:836px;top:463px;font-size:11px;letter-spacing:-0.043px">Undrained shear strength</div>
<div class="t" style="left:836px;top:534px;font-size:11px;letter-spacing:-0.159px">Drilling progress / chisel use</div>
<div class="t" style="left:495px;top:271px;font-size:11px;letter-spacing:0.067px">Mu,U</div>
<div class="t" style="left:496px;top:301px;font-size:11px;letter-spacing:0.540px">fs2,t2</div>
<div class="t" style="left:496px;top:432px;font-size:11px;letter-spacing:0.100px">dbn</div>
<div class="t" style="left:1013px;top:331px;font-size:11px;letter-spacing:0.100px">hum2</div>
<div class="t" style="left:72px;top:627px;font-size:9.5px;font-weight:bold;color:#1a1a1a;letter-spacing:0.175px">Depth</div>
<div class="t" style="left:132px;top:627px;font-size:9.5px;font-weight:bold;color:#1a1a1a;letter-spacing:0.267px">Fill</div>
<div class="t" style="left:191px;top:627px;font-size:9.5px;font-weight:bold;color:#1a1a1a;letter-spacing:-0.070px">Description</div>
<div class="t" style="left:72px;top:694px;font-size:12px;font-weight:bold;color:#000;letter-spacing:0.067px">0,50</div>
<div class="t" style="left:191px;top:644px;font-size:12px;font-weight:bold;color:#000;letter-spacing:-0.318px">0,50 m - Topsoil, Silt, slightly fine sandy, slightly clayey, darkbrown,</div>
<div class="t" style="left:556px;top:644px;font-size:12px;font-weight:bold;color:#000;letter-spacing:-0.400px">slightly humous</div>
<div class="t" style="left:72px;top:763px;font-size:12px;color:#1a1a1a;letter-spacing:-0.633px">1,40</div>
<div class="t" style="left:190px;top:714px;font-size:12px;color:#1a1a1a;letter-spacing:-0.063px">1,40 m - Cretaceous Silt, slightly fine sandy, slightly clayey to clayey, stiff, lightyellowbrown, calcareous</div>
<div class="t" style="left:192px;top:743px;font-size:12px;color:#1a1a1a;letter-spacing:-0.305px">0,90 m - 1,40 m , sandy</div>
<div class="a" style="left:0;top:0;width:1492px;height:793px;overflow:hidden"><div class="t" style="left:190px;top:784px;font-size:12px;color:#1a1a1a;letter-spacing:-0.081px">3.30 m - Cretaceous Clay, silty, slightly fine sandy, medium sandy, occasionally gravelly, occasionally Fine sand bands, stiff to very stiff, brown, slightly calcareous</div></div>
<div class="t" style="left:63px;top:804px;font-size:12.5px;color:#1a1a1a;letter-spacing:-0.175px">1 / 5</div>
</body>
</html>
